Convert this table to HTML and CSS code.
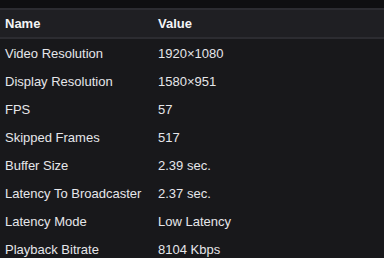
FILE: index.html
```html
<!DOCTYPE html>
<html>
<head>
<meta charset="utf-8">
<link rel="stylesheet" href="styles.css">
</head>
<body>
<div class="top"></div>
<table class="stats">
  <thead>
    <tr><th class="c1">Name</th><th>Value</th></tr>
  </thead>
  <tbody>
    <tr><td class="c1">Video Resolution</td><td>1920×1080</td></tr>
    <tr><td class="c1">Display Resolution</td><td>1580×951</td></tr>
    <tr><td class="c1">FPS</td><td>57</td></tr>
    <tr><td class="c1">Skipped Frames</td><td>517</td></tr>
    <tr><td class="c1">Buffer Size</td><td>2.39 sec.</td></tr>
    <tr><td class="c1">Latency To Broadcaster</td><td>2.37 sec.</td></tr>
    <tr><td class="c1">Latency Mode</td><td>Low Latency</td></tr>
    <tr><td class="c1">Playback Bitrate</td><td>8104 Kbps</td></tr>
  </tbody>
</table>
</body>
</html>
```
FILE: styles.css
```css
html, body {
  margin: 0;
  padding: 0;
  background: #18181b;
  overflow: hidden;
}
body {
  font-family: "Liberation Sans", Arial, sans-serif;
  font-size: 13px;
  color: #e6e6ea;
}
.top {
  height: 8px;
  background: #0f0f11;
}
.stats {
  width: 100%;
  border-collapse: collapse;
}
.stats thead tr {
  background: #1f1f23;
  border-top: 2px solid #2c2c31;
  border-bottom: 2px solid #2c2c31;
}
.stats th {
  text-align: left;
  font-weight: 700;
  color: #f4f4f6;
  height: 27px;
  padding: 0;
}
.stats td {
  height: 28px;
  padding: 0;
  vertical-align: middle;
}
.stats .c1 {
  width: 153px;
  padding-left: 5px;
}
```
